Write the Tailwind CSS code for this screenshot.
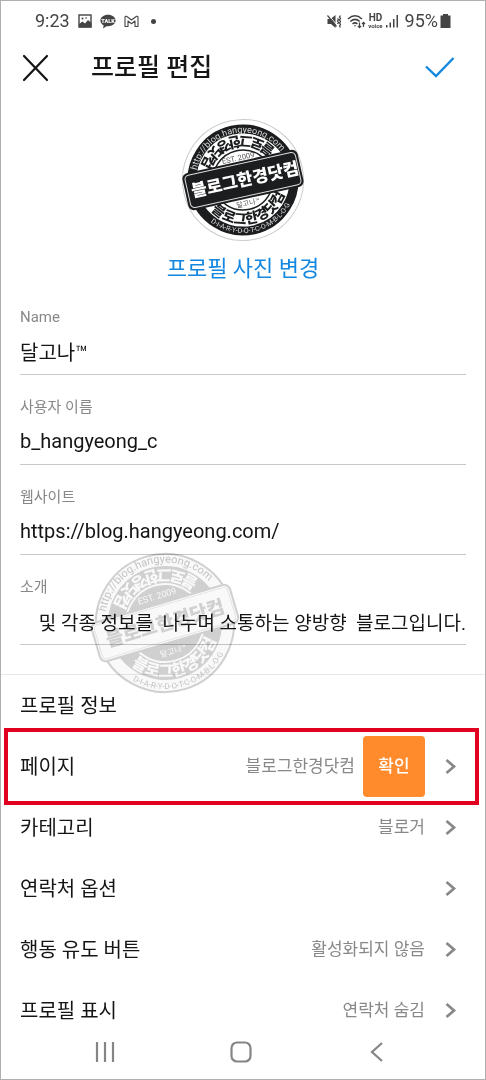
<!DOCTYPE html>
<html lang="ko">
<head>
<meta charset="utf-8">
<meta name="viewport" content="width=device-width, initial-scale=1">
<title>프로필 편집</title>
<script src="https://cdn.jsdelivr.net/npm/@tailwindcss/browser@4"></script>
</head>
<body class="bg-white font-['Roboto','Noto_Sans_CJK_KR',sans-serif] text-[#151515]">
<div class="relative flex min-h-screen flex-col border border-[#b0b0b0]">

  <div class="flex h-10 items-center justify-between px-[34px] text-[#444]">
    <div class="flex items-center gap-2">
      <span class="text-lg">9:23</span>
      <svg class="h-[14px] w-[14px]" viewBox="0 0 14 14" fill="none"><rect x="1" y="1" width="12" height="12" stroke="currentColor" stroke-width="1.4"/><path d="M1 10l3.500-2.500 2.500 2 3-3.500 3.500 3v4.500H1z" fill="currentColor"/><circle cx="4.500" cy="4.500" r="1" fill="currentColor"/><circle cx="8" cy="4" r=".8" fill="currentColor"/></svg>
      <svg class="h-[15px] w-4" viewBox="0 0 16 15"><path d="M8 .8C3.700.800.400 3.300.400 6.600c0 2.100 1.300 3.900 3.300 4.900L3 14.400l3.500-2.200 1.500.1c4.200 0 7.600-2.500 7.600-5.700S12.200.8 8 .8z" fill="currentColor"/><text x="8" y="8.600" text-anchor="middle" font-size="5.500" font-weight="900" fill="#fff">TALK</text></svg>
      <svg class="h-[13px] w-[15px]" viewBox="0 0 15 13" fill="none" stroke="currentColor" stroke-width="1.100" stroke-linejoin="round"><path d="M1 11.500V2.500q0-1.500 1.500-1.200L7.500 5l5-3.700Q14 1 14 2.500v9h-3V6L7.500 8.700 4 6v5.500z"/></svg>
      <span class="ml-1 h-[5px] w-[5px] rounded-full bg-current"></span>
    </div>
    <div class="flex items-center">
      <svg class="h-[15px] w-[15px]" viewBox="0 0 15 15" fill="none" stroke="currentColor"><path d="M.5 5h3L8.500 1v13L4 10H.500z" fill="currentColor" stroke="none"/><path d="M1.500 1l8.500 10" stroke="#fff" stroke-width="1"/><path d="M.5 1.500l9 11" stroke-width="1.200"/><path d="M10.500 4.500l1 1-1 1.500 1 1.500-1 1.500M13.500 1.500l-1 1.500 1 1.500-1 1.500 1 1.500-1 1.500 1 1.500-1 1.500 1 1.500" stroke-width="1.300"/></svg>
      <svg class="ml-[5px] h-[15px] w-[19px]" viewBox="0 0 19 15" fill="none" stroke="currentColor" stroke-width="1.500"><path d="M1 5q7-6.500 14 0M3.300 7.500q4.700-4.300 9.400 0M5.500 10q2.500-2.200 5 0"/><circle cx="8" cy="11.700" r=".8" fill="currentColor" stroke="none"/><path d="M12.500 8.500v5M11 12l1.500 1.700L14 12M16.500 13V8.500M15 10l1.500-1.700L18 10" stroke-width="1.200"/></svg>
      <span class="ml-0.5 flex flex-col items-center font-bold"><span class="text-[10px] leading-[9px]">HD</span><span class="text-[6px] leading-[7px]">voice</span></span>
      <svg class="ml-[3px] h-[14px] w-[13px]" viewBox="0 0 13 14" fill="currentColor"><path d="M0 11h1.500v2.500H0zM3.500 8.500H5v5H3.500zM7 5h1.500v8.500H7zM10.500 1H12v12.500h-1.500z"/></svg>
      <span class="ml-1.5 text-lg">95%</span>
      <svg class="ml-0.5 h-[14px] w-[11px]" viewBox="0 0 11 14" fill="currentColor"><path d="M3 0h5v1.500h2.500V14H.500V1.500H3z"/></svg>
    </div>
  </div>

  <header class="flex h-[54px] items-center pl-5 pr-[30px]">
    <button type="button" aria-label="닫기"><svg class="h-7 w-7" viewBox="0 0 28 28" fill="none" stroke="#151515" stroke-width="2.200" stroke-linecap="round"><path d="M3 2l23 24M26 2L3 26"/></svg></button>
    <h1 class="ml-[42px] flex-1 text-[25px] font-medium leading-8">프로필 편집</h1>
    <button type="button" aria-label="저장"><svg class="h-6 w-[30px]" viewBox="0 0 30 24" fill="none" stroke="#1488e0" stroke-width="2.400"><path d="M1 10.500l10 9.500L28.500 2"/></svg></button>
  </header>

  <div class="flex flex-col items-center pt-[22px]">
    <svg class="h-[126px] w-[126px]" viewBox="-63 -63 126 126" role="img" aria-label="블로그한경닷컴">
      <defs>
        <path id="arcTop" d="M-47.500 0A47.500 47.500 0 0 1 47.500 0"/>
        <path id="arcBottom" d="M-53 0A53 53 0 0 0 53 0"/>
        <path id="innerBottom" d="M-44 0A44 44 0 0 0 44 0"/>
        <path id="innerTop" d="M44 0A44 44 0 0 0 -44 0"/>
      </defs>
      <g transform="rotate(-12.500)">
        <circle r="60.500" fill="#fff" stroke="#ccc" stroke-width="1"/>
        <circle r="51" fill="none" stroke="#1b1d1e" stroke-width="9"/>
        <circle r="30" fill="#fff" stroke="#1b1d1e" stroke-width="1.500"/>
        <g fill="#1b1d1e" font-weight="900" font-size="14" text-anchor="middle">
          <text><textPath href="#innerBottom" startOffset="50%">블로그한경닷컴</textPath></text>
          <text><textPath href="#innerTop" startOffset="50%">블로그한경닷컴</textPath></text>
        </g>
        <g fill="#ddd" text-anchor="middle">
          <text font-size="9"><textPath href="#arcTop" startOffset="50%">http://blog.hangyeong.com</textPath></text>
          <text font-size="7"><textPath href="#arcBottom" startOffset="50%">D-I-A-R-Y-D-O-T-C-O-M-B-L-O-G</textPath></text>
        </g>
        <text y="-20" text-anchor="middle" font-size="7.500" fill="#555">EST. 2009</text>
        <text y="26" text-anchor="middle" font-size="7" fill="#555">달고나™</text>
        <rect x="-58" y="-18" width="116" height="36" rx="5" fill="#1b1d1e" stroke="#1b1d1e" stroke-width="2"/>
        <rect x="-56.500" y="-16.500" width="113" height="33" rx="4" fill="none" stroke="#ddd" stroke-width="1"/>
        <text x="2" y="6" text-anchor="middle" font-size="17" font-weight="900" fill="#fff">블로그한경닷컴</text>
      </g>
    </svg>
    <a href="#photo" class="mt-2.5 text-[22px] leading-8 text-[#1488e0]">프로필 사진 변경</a>
  </div>

  <form class="mx-[19px]">
    <div class="flex h-[90px] flex-col justify-end border-b border-[#c8c8c8] pb-[7px]">
      <label for="name" class="text-[15px] leading-6 text-[#888]">Name</label>
      <input id="name" class="mt-1.5 h-8 w-full text-xl outline-none" value="달고나™">
    </div>
    <div class="flex h-[90px] flex-col justify-end border-b border-[#c8c8c8] pb-[7px]">
      <label for="user" class="text-[15px] leading-6 text-[#888]">사용자 이름</label>
      <input id="user" class="mt-1.5 h-8 w-full text-xl outline-none" value="b_hangyeong_c">
    </div>
    <div class="flex h-[90px] flex-col justify-end border-b border-[#c8c8c8] pb-[7px]">
      <label for="site" class="text-[15px] leading-6 text-[#888]">웹사이트</label>
      <input id="site" class="mt-1.5 h-8 w-full text-xl outline-none" value="https://blog.hangyeong.com/">
    </div>
    <div class="flex h-[90px] flex-col justify-end border-b border-[#c8c8c8] pb-[7px]">
      <label for="bio" class="text-[15px] leading-6 text-[#888]">소개</label>
      <input id="bio" class="mt-1.5 h-8 w-full text-right text-[19px] outline-none" value="및 각종 정보를  나누며 소통하는 양방향  블로그입니다.">
    </div>
  </form>

  <section class="mt-[29px] border-t border-[#e8e8e8] text-xl">
    <h2 class="flex h-[61px] items-center px-[19px]">프로필 정보</h2>
    <div class="-my-2 ml-[3px] mr-[6px] flex h-[77px] items-center border-4 border-[#e00020] pl-3 pr-[18px]">
      <span class="flex-1">페이지</span>
      <span class="text-[17px] text-[#888]">블로그한경닷컴</span>
      <button type="button" class="ml-2 h-[61px] w-[62px] rounded-sm bg-[#ff8b2c] text-[17px] font-medium text-white">확인</button>
      <svg class="ml-5 h-4 w-3" viewBox="0 0 12 16" fill="none" stroke="#888" stroke-width="2.700"><path d="M1.500 1L9 7.500 1.500 14"/></svg>
    </div>
    <a href="#category" class="flex h-[61px] items-center pl-[19px] pr-7">
      <span class="flex-1">카테고리</span><span class="text-[17px] text-[#888]">블로거</span>
      <svg class="ml-5 h-4 w-3" viewBox="0 0 12 16" fill="none" stroke="#888" stroke-width="2.700"><path d="M1.500 1L9 7.500 1.500 14"/></svg>
    </a>
    <a href="#contact" class="flex h-[61px] items-center pl-[19px] pr-7">
      <span class="flex-1">연락처 옵션</span>
      <svg class="ml-5 h-4 w-3" viewBox="0 0 12 16" fill="none" stroke="#888" stroke-width="2.700"><path d="M1.500 1L9 7.500 1.500 14"/></svg>
    </a>
    <a href="#action" class="flex h-[61px] items-center pl-[19px] pr-7">
      <span class="flex-1">행동 유도 버튼</span><span class="text-[17px] text-[#888]">활성화되지 않음</span>
      <svg class="ml-5 h-4 w-3" viewBox="0 0 12 16" fill="none" stroke="#888" stroke-width="2.700"><path d="M1.500 1L9 7.500 1.500 14"/></svg>
    </a>
    <a href="#display" class="flex h-[61px] items-center pl-[19px] pr-7">
      <span class="flex-1">프로필 표시</span><span class="text-[17px] text-[#888]">연락처 숨김</span>
      <svg class="ml-5 h-4 w-3" viewBox="0 0 12 16" fill="none" stroke="#888" stroke-width="2.700"><path d="M1.500 1L9 7.500 1.500 14"/></svg>
    </a>
  </section>

  <nav class="flex items-center justify-between pl-[93px] pr-[97px]">
    <button type="button" aria-label="최근 앱"><svg class="h-5 w-[22px]" viewBox="0 0 22 20" stroke="#858585" stroke-width="2.200"><path d="M3 0v20M11 0v20M19 0v20"/></svg></button>
    <button type="button" aria-label="홈"><svg class="h-[22px] w-[22px]" viewBox="0 0 22 22" fill="none" stroke="#858585" stroke-width="2.200"><rect x="1.500" y="1.500" width="19" height="19" rx="5.500"/></svg></button>
    <button type="button" aria-label="뒤로"><svg class="h-5 w-[22px]" viewBox="0 0 22 20" fill="none" stroke="#858585" stroke-width="2.200"><path d="M16 1L6 10l10 9"/></svg></button>
  </nav>

  <svg class="pointer-events-none absolute left-[86px] top-[544px] h-[156px] w-[156px] opacity-80 mix-blend-multiply" viewBox="-78 -78 156 156" aria-hidden="true">
    <defs>
      <path id="wTop" d="M-60.500 0A60.500 60.500 0 0 1 60.500 0"/>
      <path id="wBottom" d="M-66 0A66 66 0 0 0 66 0"/>
      <path id="wInnerBottom" d="M-54 0A54 54 0 0 0 54 0"/>
      <path id="wInnerTop" d="M54 0A54 54 0 0 0 -54 0"/>
    </defs>
    <g transform="rotate(-16.500)">
      <circle r="69" fill="#f8f8f8" stroke="#c4c4c4" stroke-width="2"/>
      <circle r="57" fill="#c4c4c4"/>
      <circle r="39" fill="#c4c4c4" stroke="#f8f8f8" stroke-width="2"/>
      <g fill="#f8f8f8" font-weight="900" font-size="16" text-anchor="middle">
        <text><textPath href="#wInnerBottom" startOffset="50%">블로그한경닷컴</textPath></text>
        <text><textPath href="#wInnerTop" startOffset="50%">블로그한경닷컴</textPath></text>
      </g>
      <g fill="#b4b4b4" text-anchor="middle">
        <text font-size="11"><textPath href="#wTop" startOffset="50%">http://blog.hangyeong.com</textPath></text>
        <text font-size="8"><textPath href="#wBottom" startOffset="50%">D-I-A-R-Y-D-O-T-C-O-M-B-L-O-G</textPath></text>
      </g>
      <text y="-25" text-anchor="middle" font-size="9" fill="#f8f8f8">EST. 2009</text>
      <text y="32" text-anchor="middle" font-size="8" fill="#f8f8f8">달고나™</text>
      <rect x="-72" y="-20" width="144" height="40" rx="6" fill="#f8f8f8" stroke="#c4c4c4" stroke-width="2"/>
      <rect x="-69.500" y="-17.500" width="139" height="35" rx="4" fill="none" stroke="#dcdcdc" stroke-width="1"/>
      <text y="7" text-anchor="middle" font-size="19" font-weight="900" fill="#c4c4c4">블로그한경닷컴</text>
    </g>
  </svg>
</div>
</body>
</html>
